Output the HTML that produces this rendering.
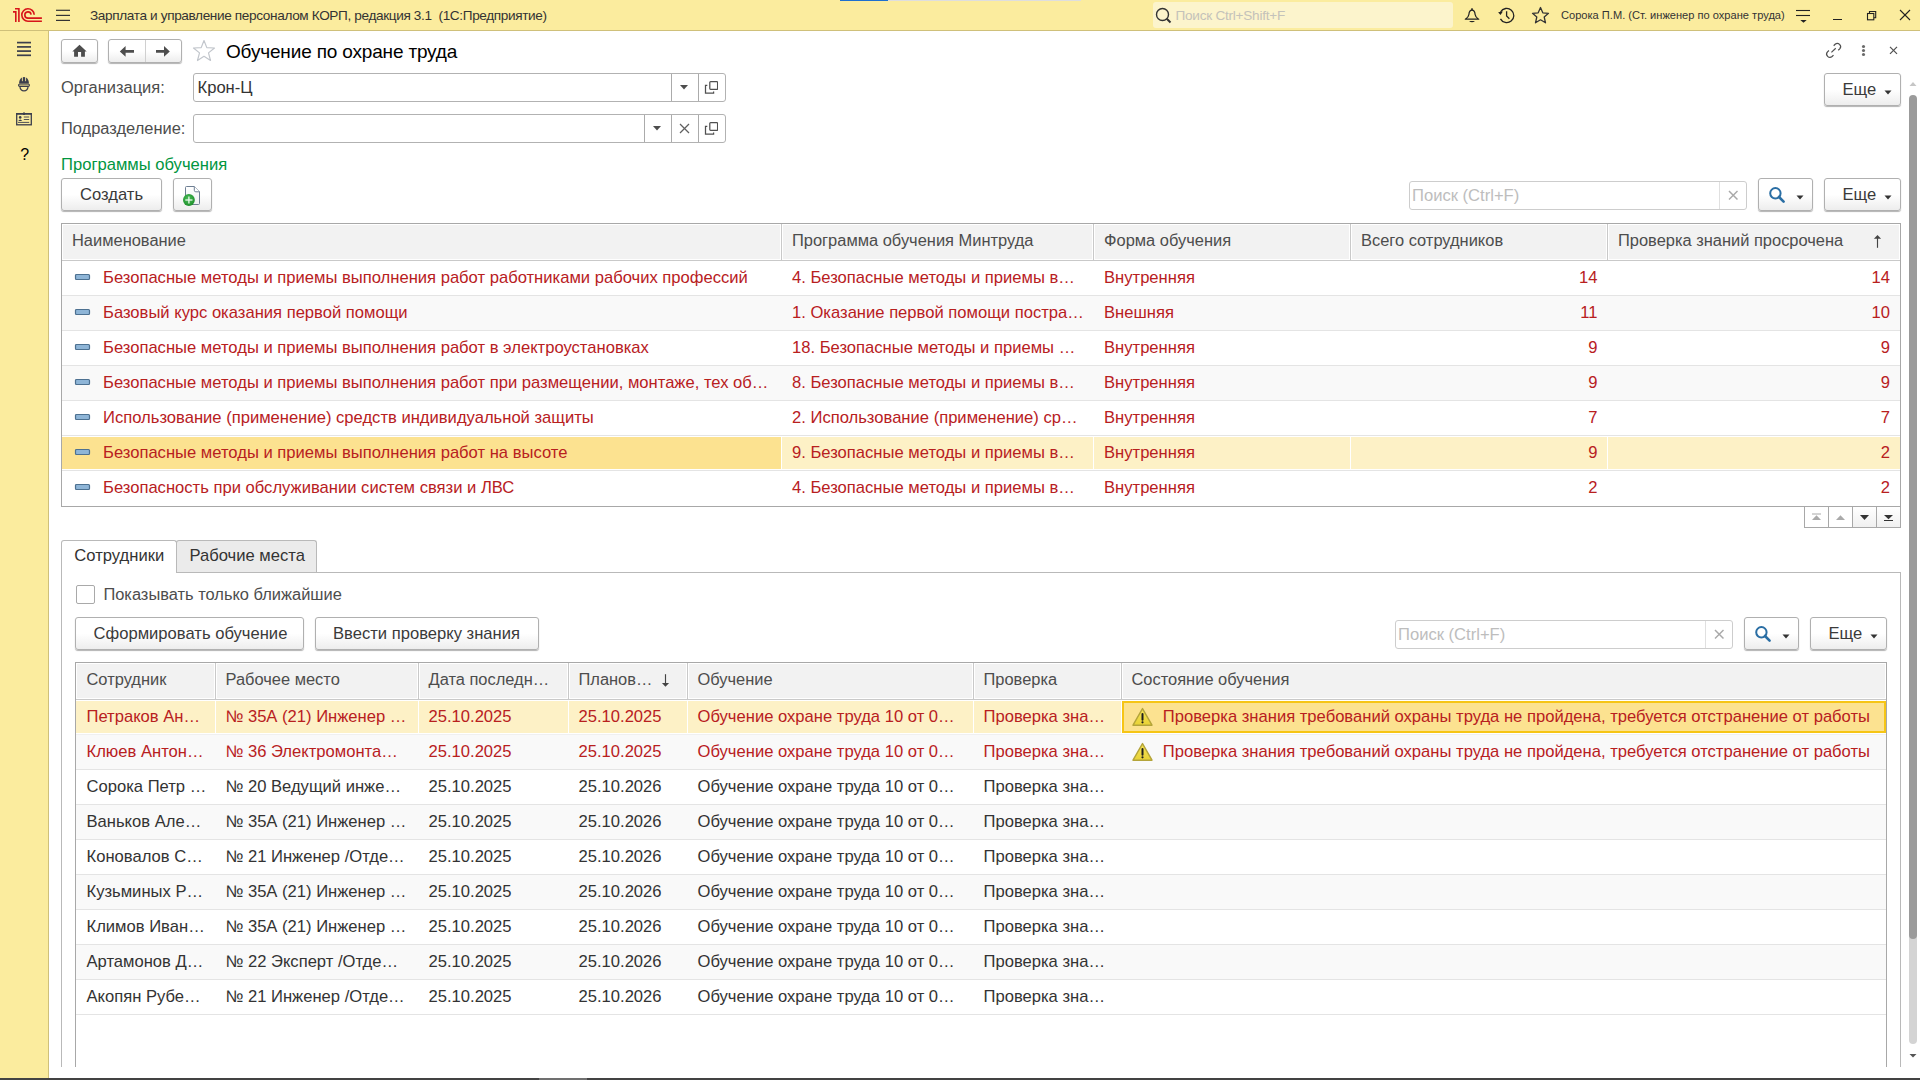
<!DOCTYPE html>
<html lang="ru"><head><meta charset="utf-8"><title>Обучение по охране труда</title>
<style>
html,body{margin:0;padding:0;}
body{width:1920px;height:1080px;overflow:hidden;position:relative;background:#fff;font-family:"Liberation Sans",sans-serif;}
.t{position:absolute;white-space:nowrap;}
.b{position:absolute;box-sizing:border-box;}
.btn{position:absolute;border:1px solid #B0B0B0;border-radius:3px;background:linear-gradient(#FFFFFF 0%,#FFFFFF 50%,#EDEDED 100%);box-shadow:0 1px 1px rgba(0,0,0,0.3);}
</style></head><body>
<div class="b" style="left:0px;top:0px;width:1920px;height:31px;background:#FBEC9E;border-bottom:1px solid #CFC07A;"></div>
<div class="b" style="left:840px;top:0px;width:48px;height:1px;background:#1D6FCF;"></div>
<div class="b" style="left:888px;top:0px;width:193px;height:1px;background:#DEDEDE;"></div>
<svg class="b" style="left:10px;top:5px;" width="36" height="20" viewBox="0 0 36 20"><g fill="none" stroke="#D7141A" stroke-width="1.6">
<path d="M3 6.85 H5.8 V16.9"/><path d="M5 3.8 H8.9 V16.9"/>
<path d="M24.2 9.7 A6.2 6.2 0 1 0 18 16.2 H31.9"/>
<path d="M21.1 9.6 A3.15 3.15 0 1 0 18 13.15 H31.9"/>
</g></svg>
<svg class="b" style="left:55px;top:8px;" width="16" height="14" viewBox="0 0 16 14"><g stroke="#333" stroke-width="1.2"><line x1="1" y1="2.3" x2="15" y2="2.3"/><line x1="1" y1="7.4" x2="15" y2="7.4"/><line x1="1" y1="12.4" x2="15" y2="12.4"/></g></svg>
<div class="t" style="left:90px;top:8.89px;font-size:13.6px;line-height:13.6px;color:#333;letter-spacing:-0.36px;">Зарплата и управление персоналом КОРП, редакция 3.1&nbsp; (1С:Предприятие)</div>
<div class="b" style="left:1153px;top:2px;width:300px;height:26px;background:#FCF4CC;border-radius:3px;"></div>
<svg class="b" style="left:1155px;top:7px;" width="18" height="17" viewBox="0 0 18 17"><g fill="none" stroke="#333" stroke-width="1.4"><circle cx="7.5" cy="7.5" r="6"/><line x1="11.8" y1="11.8" x2="15.5" y2="15.5" stroke-width="2"/></g></svg>
<div class="t" style="left:1175.5px;top:8.69px;font-size:13.6px;line-height:13.6px;color:#C4C2BA;letter-spacing:-0.25px;">Поиск Ctrl+Shift+F</div>
<svg class="b" style="left:1463px;top:6px;" width="18" height="19" viewBox="0 0 18 19"><path d="M9 4.2 C6.6 4.2 6.1 6 5.9 8.5 C5.7 10.6 4.6 11.8 2.3 13.2 L15.7 13.2 C13.4 11.8 12.3 10.6 12.1 8.5 C11.9 6 11.4 4.2 9 4.2 Z" fill="none" stroke="#222" stroke-width="1.25" stroke-linejoin="round"/><rect x="8.2" y="2.3" width="1.6" height="2" fill="#222"/><path d="M6 15 L12 15 Q9 17.4 6 15 Z" fill="#222"/></svg>
<svg class="b" style="left:1497px;top:6px;" width="19" height="19" viewBox="0 0 19 19"><g fill="none" stroke="#222" stroke-width="1.3"><path d="M3.45 12.85 A7.1 7.1 0 1 0 3.6 5.9"/><path d="M9.6 5.3 L9.6 10 L12.4 12.7"/></g><path d="M1.1 6.3 L5.9 5.5 L3.5 9.1 Z" fill="#222"/></svg>
<svg class="b" style="left:1531px;top:6px;" width="19" height="19" viewBox="0 0 19 19"><path d="M9.5 1.5 L11.8 6.8 L17.5 7.3 L13.2 11 L14.5 16.8 L9.5 13.8 L4.5 16.8 L5.8 11 L1.5 7.3 L7.2 6.8 Z" fill="none" stroke="#333" stroke-width="1.3" stroke-linejoin="round"/></svg>
<div class="t" style="left:1561px;top:9.90px;font-size:11.1px;line-height:11.1px;color:#333;">Сорока П.М. (Ст. инженер по охране труда)</div>
<svg class="b" style="left:1795px;top:8px;" width="16" height="16" viewBox="0 0 16 16"><g stroke="#222" stroke-width="1.1"><line x1="1" y1="2.5" x2="15" y2="2.5"/><line x1="1" y1="7.5" x2="15" y2="7.5"/></g><path d="M5.3 12 L11.7 12 L8.5 14.8Z" fill="#222"/></svg>
<div class="b" style="left:1833px;top:19px;width:9px;height:1.1px;background:#222;"></div>
<svg class="b" style="left:1866px;top:10px;" width="12" height="12" viewBox="0 0 12 12"><g fill="none" stroke="#222" stroke-width="1.1"><rect x="1.5" y="3.5" width="6.3" height="6.3"/><path d="M3.5 3.5 L3.5 1.5 L9.7 1.5 L9.7 7.7 L7.8 7.7"/></g></svg>
<svg class="b" style="left:1899px;top:9px;" width="12" height="12" viewBox="0 0 12 12"><g stroke="#222" stroke-width="1.1"><line x1="1" y1="1" x2="11" y2="11"/><line x1="11" y1="1" x2="1" y2="11"/></g></svg>
<div class="b" style="left:0px;top:31px;width:49px;height:1049px;background:#FBEC9E;border-right:1px solid #CFC07A;"></div>
<svg class="b" style="left:16px;top:41px;" width="16" height="16" viewBox="0 0 16 16"><g stroke="#3C3F4C" stroke-width="1.7"><line x1="1" y1="1.6" x2="15" y2="1.6"/><line x1="1" y1="5.9" x2="15" y2="5.9"/><line x1="1" y1="10.1" x2="15" y2="10.1"/><line x1="1" y1="14.3" x2="15" y2="14.3"/></g></svg>
<svg class="b" style="left:17px;top:76px;" width="14" height="16" viewBox="0 0 14 16"><path d="M2.1 7.4 C2.1 3.5 4.2 1.2 7 1 C9.8 1.2 11.9 3.5 11.9 7.4 Z" fill="#3C3F4C"/><g stroke="#FBEC9E" stroke-width="0.9"><line x1="5.4" y1="0" x2="5.4" y2="5.2"/><line x1="8.6" y1="0" x2="8.6" y2="5.2"/></g><rect x="1.6" y="8" width="10.8" height="2.4" rx="1.1" fill="#D8CB86" stroke="#3C3F4C" stroke-width="1.1"/><path d="M2.9 10.6 C3.2 13.5 5 14.8 7 14.8 C9 14.8 10.8 13.5 11.1 10.6" fill="none" stroke="#3C3F4C" stroke-width="1.2"/></svg>
<svg class="b" style="left:15px;top:112px;" width="18" height="14" viewBox="0 0 18 14"><rect x="1.7" y="1.8" width="14.6" height="11" fill="none" stroke="#3C3F4C" stroke-width="1.3"/><rect x="1" y="1" width="16" height="1.6" fill="#3C3F4C"/><rect x="8" y="0.5" width="2" height="2.5" fill="#3C3F4C"/><circle cx="5.2" cy="5.4" r="1.3" fill="#3C3F4C"/><path d="M3.2 9 Q5.2 5.8 7.2 9Z" fill="#3C3F4C"/><g stroke="#3C3F4C" stroke-width="0.9"><line x1="8.8" y1="5" x2="14.2" y2="5"/><line x1="8.8" y1="7.5" x2="14.2" y2="7.5"/><line x1="3" y1="10.4" x2="14.2" y2="10.4"/></g></svg>
<div class="t" style="left:20.3px;top:147.06px;font-size:16px;line-height:16px;color:#000;">?</div>
<div class="b" style="left:0px;top:1078px;width:1920px;height:2px;background:#434343;"></div>
<div class="b" style="left:539px;top:1078px;width:48px;height:2px;background:#707070;"></div>
<div class="btn" style="left:61px;top:39px;width:35px;height:22px;"></div>
<svg class="b" style="left:71px;top:44px;" width="17" height="16" viewBox="0 0 17 16"><path d="M8.5 0.8 L15.7 7.6 L13.9 7.6 V12.8 H10.1 V7.9 H7 V12.8 H3.1 V7.6 H1.3 Z" fill="#4D4D4D"/></svg>
<div class="btn" style="left:108px;top:39px;width:72px;height:22px;"></div>
<div class="b" style="left:145px;top:40px;width:1px;height:22px;background:#D0D0D0;"></div>
<svg class="b" style="left:118px;top:44px;" width="18" height="16" viewBox="0 0 18 16"><path d="M1.8 7.5 L7.6 2 L7.6 6 L16 6 L16 8.8 L7.6 8.8 L7.6 12.8 Z" fill="#4D4D4D"/></svg>
<svg class="b" style="left:154px;top:44px;" width="18" height="16" viewBox="0 0 18 16"><path d="M15.8 7.5 L10 2 L10 6 L2 6 L2 8.8 L10 8.8 L10 12.8 Z" fill="#4D4D4D"/></svg>
<svg class="b" style="left:192px;top:39px;" width="24" height="24" viewBox="0 0 24 24"><path d="M12 1.5 L14.8 8.6 L22.5 9 L16.5 13.9 L18.5 21.5 L12 17.3 L5.5 21.5 L7.5 13.9 L1.5 9 L9.2 8.6 Z" fill="none" stroke="#C2C6CC" stroke-width="1.2" stroke-linejoin="round"/></svg>
<div class="t" style="left:226px;top:41.92px;font-size:19px;line-height:19px;color:#000;letter-spacing:-0.17px;">Обучение по охране труда</div>
<svg class="b" style="left:1824px;top:41px;" width="20" height="20" viewBox="0 0 20 20"><g fill="none" stroke="#505050" stroke-width="1.3" transform="translate(9.6 9.4) scale(0.93) translate(-9.6 -9.4)"><path d="M4.6 9.5 L3.03 11.03 A3.5 3.5 0 0 0 7.97 15.97 L9.5 14.4"/><path d="M9.7 4.4 L11.23 2.83 A3.5 3.5 0 0 1 16.17 7.77 L14.6 9.3"/><path d="M7.25 11.5 L11.9 7.1"/></g></svg>
<svg class="b" style="left:1860px;top:43px;" width="6" height="15" viewBox="0 0 6 15"><g fill="#6A6A6A"><circle cx="3.5" cy="3.5" r="1.55"/><circle cx="3.5" cy="7.5" r="1.55"/><circle cx="3.5" cy="11.5" r="1.55"/></g></svg>
<svg class="b" style="left:1888px;top:45px;" width="11" height="11" viewBox="0 0 11 11"><g stroke="#505050" stroke-width="1.2"><line x1="2" y1="1.9" x2="9" y2="8.9"/><line x1="9" y1="1.9" x2="2" y2="8.9"/></g></svg>
<div class="btn" style="left:1824px;top:73px;width:75px;height:31px;"></div>
<div class="t" style="left:1842.5px;top:82.45px;font-size:16.6px;line-height:16.6px;color:#3A3A3A;">Еще</div>
<svg class="b" style="left:1884px;top:90px;" width="8" height="5" viewBox="0 0 8 5"><path d="M0.5 0.5 L7.5 0.5 L4 4.5 Z" fill="#333"/></svg>
<svg class="b" style="left:1908px;top:80px;" width="10" height="8" viewBox="0 0 10 8"><path d="M1.5 6 L5 2 L8.5 6 Z" fill="#C6C6C6"/></svg>
<div class="b" style="left:1909px;top:880px;width:8px;height:164px;background:#D4D4D4;border-radius:4px;"></div>
<div class="b" style="left:1909px;top:95px;width:8px;height:844px;background:#9B9B9B;border-radius:4px;"></div>
<svg class="b" style="left:1908px;top:1052px;" width="10" height="8" viewBox="0 0 10 8"><path d="M1.5 2 L8.5 2 L5 5.6 Z" fill="#555"/></svg>
<div class="t" style="left:61px;top:78.98px;font-size:16.45px;line-height:16.45px;color:#4D4D4D;">Организация:</div>
<div class="b" style="left:193px;top:73px;width:533px;height:29px;border:1px solid #B2B2B2;border-radius:3px;background:#fff;"></div>
<div class="t" style="left:197.5px;top:79.55px;font-size:16.6px;line-height:16.6px;color:#333;">Крон-Ц</div>
<div class="b" style="left:671px;top:74px;width:1px;height:27px;background:#ABABAB;"></div>
<div class="b" style="left:698px;top:74px;width:1px;height:27px;background:#ABABAB;"></div>
<svg class="b" style="left:679px;top:84px;" width="10" height="6" viewBox="0 0 10 6"><path d="M1 1 L9 1 L5 5.5 Z" fill="#4D4D4D"/></svg>
<svg class="b" style="left:704px;top:80px;" width="14" height="14" viewBox="0 0 14 14"><g fill="none" stroke="#505050" stroke-width="1.25"><rect x="5.8" y="1.6" width="7.8" height="7.8" rx="0.8"/><path d="M3.3 5.4 H1.5 V13.1 H9.6 V11.5"/></g></svg>
<div class="t" style="left:61px;top:119.58px;font-size:16.45px;line-height:16.45px;color:#4D4D4D;">Подразделение:</div>
<div class="b" style="left:193px;top:114px;width:533px;height:29px;border:1px solid #B2B2B2;border-radius:3px;background:#fff;"></div>
<div class="b" style="left:644px;top:115px;width:1px;height:27px;background:#ABABAB;"></div>
<div class="b" style="left:671px;top:115px;width:1px;height:27px;background:#ABABAB;"></div>
<div class="b" style="left:698px;top:115px;width:1px;height:27px;background:#ABABAB;"></div>
<svg class="b" style="left:652px;top:125px;" width="10" height="6" viewBox="0 0 10 6"><path d="M1 1 L9 1 L5 5.5 Z" fill="#4D4D4D"/></svg>
<svg class="b" style="left:679px;top:123px;" width="11" height="11" viewBox="0 0 11 11"><g stroke="#606060" stroke-width="1.2"><line x1="1" y1="1" x2="10" y2="10"/><line x1="10" y1="1" x2="1" y2="10"/></g></svg>
<svg class="b" style="left:704px;top:121px;" width="14" height="14" viewBox="0 0 14 14"><g fill="none" stroke="#505050" stroke-width="1.25"><rect x="5.8" y="1.6" width="7.8" height="7.8" rx="0.8"/><path d="M3.3 5.4 H1.5 V13.1 H9.6 V11.5"/></g></svg>
<div class="t" style="left:61px;top:156.75px;font-size:16.6px;line-height:16.6px;color:#00963F;">Программы обучения</div>
<div class="btn" style="left:61px;top:178px;width:99px;height:31px;"></div>
<div class="t" style="left:80px;top:187.45px;font-size:16.6px;line-height:16.6px;color:#3A3A3A;">Создать</div>
<div class="btn" style="left:173px;top:178px;width:37px;height:31px;"></div>
<svg class="b" style="left:182px;top:184px;" width="20" height="22" viewBox="0 0 20 22"><defs><linearGradient id="dg" x1="0" y1="0" x2="0" y2="1"><stop offset="0" stop-color="#FFFFFF"/><stop offset="1" stop-color="#EEF0F3"/></linearGradient><radialGradient id="gg" cx="0.45" cy="0.4" r="0.6"><stop offset="0" stop-color="#4CC05A"/><stop offset="1" stop-color="#1E8F2C"/></radialGradient></defs><path d="M4.5 2.5 H12.3 L17.5 7.8 V19.5 A1 1 0 0 1 16.5 20.5 H4.5 A1 1 0 0 1 3.5 19.5 V3.5 A1 1 0 0 1 4.5 2.5 Z" fill="url(#dg)" stroke="#6E7F93" stroke-width="1"/><path d="M12.3 2.5 V6.3 A1.5 1.5 0 0 0 13.8 7.8 H17.5" fill="#fff" stroke="#6E7F93" stroke-width="1"/><circle cx="6.9" cy="16" r="5.9" fill="url(#gg)"/><g stroke="#fff" stroke-width="1.3" opacity="0.9"><line x1="3.3" y1="16" x2="10.5" y2="16"/><line x1="6.9" y1="12.4" x2="6.9" y2="19.6"/></g></svg>
<div class="b" style="left:1409px;top:181px;width:338px;height:29px;border:1px solid #CDCDCD;border-radius:3px;background:#fff;"></div>
<div class="t" style="left:1412px;top:188.15px;font-size:16.6px;line-height:16.6px;color:#BDBDBD;">Поиск (Ctrl+F)</div>
<div class="b" style="left:1719px;top:182px;width:1px;height:27px;background:#E0E0E0;"></div>
<svg class="b" style="left:1728px;top:190px;" width="11" height="11" viewBox="0 0 11 11"><g stroke="#A9A9A9" stroke-width="1.5"><line x1="1" y1="1" x2="9.5" y2="9.5"/><line x1="9.5" y1="1" x2="1" y2="9.5"/></g></svg>
<div class="btn" style="left:1758px;top:178px;width:53px;height:31px;"></div>
<svg class="b" style="left:1769px;top:187px;" width="18" height="17" viewBox="0 0 18 17"><circle cx="6.4" cy="6.3" r="5.2" fill="none" stroke="#2A6EA4" stroke-width="2"/><line x1="10" y1="10" x2="14.6" y2="14.6" stroke="#2A6EA4" stroke-width="2.6" stroke-linecap="round"/></svg>
<svg class="b" style="left:1795.5px;top:195px;" width="8" height="5" viewBox="0 0 8 5"><path d="M0.5 0.5 L7.5 0.5 L4 4.5 Z" fill="#333"/></svg>
<div class="btn" style="left:1824px;top:178px;width:75px;height:31px;"></div>
<div class="t" style="left:1842.5px;top:187.45px;font-size:16.6px;line-height:16.6px;color:#3A3A3A;">Еще</div>
<svg class="b" style="left:1884px;top:195px;" width="8" height="5" viewBox="0 0 8 5"><path d="M0.5 0.5 L7.5 0.5 L4 4.5 Z" fill="#333"/></svg>
<div class="b" style="left:61px;top:223px;width:1840px;height:284px;border:1px solid #A8A8A8;background:#fff;"></div>
<div class="b" style="left:62px;top:260px;width:1838px;height:1px;background:#C9C9C9;"></div>
<div class="b" style="left:63px;top:225px;width:717px;height:34px;background:#F2F2F2;"></div>
<div class="b" style="left:783px;top:225px;width:309px;height:34px;background:#F2F2F2;"></div>
<div class="b" style="left:781px;top:224px;width:1px;height:36px;background:#C9C9C9;"></div>
<div class="b" style="left:1095px;top:225px;width:254px;height:34px;background:#F2F2F2;"></div>
<div class="b" style="left:1093px;top:224px;width:1px;height:36px;background:#C9C9C9;"></div>
<div class="b" style="left:1352px;top:225px;width:254px;height:34px;background:#F2F2F2;"></div>
<div class="b" style="left:1350px;top:224px;width:1px;height:36px;background:#C9C9C9;"></div>
<div class="b" style="left:1609px;top:225px;width:290px;height:34px;background:#F2F2F2;"></div>
<div class="b" style="left:1607px;top:224px;width:1px;height:36px;background:#C9C9C9;"></div>
<div class="t" style="left:72px;top:231.58px;font-size:16.45px;line-height:16.45px;color:#4D4D4D;">Наименование</div>
<div class="t" style="left:792px;top:231.58px;font-size:16.45px;line-height:16.45px;color:#4D4D4D;">Программа обучения Минтруда</div>
<div class="t" style="left:1104px;top:231.58px;font-size:16.45px;line-height:16.45px;color:#4D4D4D;">Форма обучения</div>
<div class="t" style="left:1361px;top:231.58px;font-size:16.45px;line-height:16.45px;color:#4D4D4D;">Всего сотрудников</div>
<div class="t" style="left:1618px;top:231.58px;font-size:16.45px;line-height:16.45px;color:#4D4D4D;">Проверка знаний просрочена</div>
<svg class="b" style="left:1872px;top:233px;" width="11" height="16" viewBox="0 0 11 16"><path d="M5.5 5 L5.5 14.8" stroke="#444" stroke-width="1.15"/><path d="M1.9 5.8 L5.5 1.9 L9.1 5.8 Z" fill="#444"/></svg>
<div class="b" style="left:62px;top:295px;width:1838px;height:1px;background:#E4E4E4;"></div>
<svg class="b" style="left:74px;top:273px;" width="17" height="8" viewBox="0 0 17 8"><rect x="1.5" y="1.5" width="14" height="5" rx="1" fill="#8EB5D7" stroke="#4D7191" stroke-width="1.2"/></svg>
<div class="t" style="left:103px;top:269.95px;font-size:16.6px;line-height:16.6px;color:#B8201E;">Безопасные методы и приемы выполнения работ работниками рабочих профессий</div>
<div class="t" style="left:792px;top:269.95px;font-size:16.6px;line-height:16.6px;color:#B8201E;">4. Безопасные методы и приемы в…</div>
<div class="t" style="left:1104px;top:269.95px;font-size:16.6px;line-height:16.6px;color:#B8201E;">Внутренняя</div>
<div class="t" style="right:322.5px;top:269.95px;font-size:16.6px;line-height:16.6px;color:#B8201E;">14</div>
<div class="t" style="right:30px;top:269.95px;font-size:16.6px;line-height:16.6px;color:#B8201E;">14</div>
<div class="b" style="left:62px;top:296px;width:1838px;height:34px;background:#F9F9F9;"></div>
<div class="b" style="left:62px;top:330px;width:1838px;height:1px;background:#E4E4E4;"></div>
<svg class="b" style="left:74px;top:308px;" width="17" height="8" viewBox="0 0 17 8"><rect x="1.5" y="1.5" width="14" height="5" rx="1" fill="#8EB5D7" stroke="#4D7191" stroke-width="1.2"/></svg>
<div class="t" style="left:103px;top:304.95px;font-size:16.6px;line-height:16.6px;color:#B8201E;">Базовый курс оказания первой помощи</div>
<div class="t" style="left:792px;top:304.95px;font-size:16.6px;line-height:16.6px;color:#B8201E;">1. Оказание первой помощи постра…</div>
<div class="t" style="left:1104px;top:304.95px;font-size:16.6px;line-height:16.6px;color:#B8201E;">Внешняя</div>
<div class="t" style="right:322.5px;top:304.95px;font-size:16.6px;line-height:16.6px;color:#B8201E;">11</div>
<div class="t" style="right:30px;top:304.95px;font-size:16.6px;line-height:16.6px;color:#B8201E;">10</div>
<div class="b" style="left:62px;top:365px;width:1838px;height:1px;background:#E4E4E4;"></div>
<svg class="b" style="left:74px;top:343px;" width="17" height="8" viewBox="0 0 17 8"><rect x="1.5" y="1.5" width="14" height="5" rx="1" fill="#8EB5D7" stroke="#4D7191" stroke-width="1.2"/></svg>
<div class="t" style="left:103px;top:339.95px;font-size:16.6px;line-height:16.6px;color:#B8201E;">Безопасные методы и приемы выполнения работ в электроустановках</div>
<div class="t" style="left:792px;top:339.95px;font-size:16.6px;line-height:16.6px;color:#B8201E;">18. Безопасные методы и приемы …</div>
<div class="t" style="left:1104px;top:339.95px;font-size:16.6px;line-height:16.6px;color:#B8201E;">Внутренняя</div>
<div class="t" style="right:322.5px;top:339.95px;font-size:16.6px;line-height:16.6px;color:#B8201E;">9</div>
<div class="t" style="right:30px;top:339.95px;font-size:16.6px;line-height:16.6px;color:#B8201E;">9</div>
<div class="b" style="left:62px;top:366px;width:1838px;height:34px;background:#F9F9F9;"></div>
<div class="b" style="left:62px;top:400px;width:1838px;height:1px;background:#E4E4E4;"></div>
<svg class="b" style="left:74px;top:378px;" width="17" height="8" viewBox="0 0 17 8"><rect x="1.5" y="1.5" width="14" height="5" rx="1" fill="#8EB5D7" stroke="#4D7191" stroke-width="1.2"/></svg>
<div class="t" style="left:103px;top:374.95px;font-size:16.6px;line-height:16.6px;color:#B8201E;">Безопасные методы и приемы выполнения работ при размещении, монтаже, тех об…</div>
<div class="t" style="left:792px;top:374.95px;font-size:16.6px;line-height:16.6px;color:#B8201E;">8. Безопасные методы и приемы в…</div>
<div class="t" style="left:1104px;top:374.95px;font-size:16.6px;line-height:16.6px;color:#B8201E;">Внутренняя</div>
<div class="t" style="right:322.5px;top:374.95px;font-size:16.6px;line-height:16.6px;color:#B8201E;">9</div>
<div class="t" style="right:30px;top:374.95px;font-size:16.6px;line-height:16.6px;color:#B8201E;">9</div>
<div class="b" style="left:62px;top:435px;width:1838px;height:1px;background:#E4E4E4;"></div>
<svg class="b" style="left:74px;top:413px;" width="17" height="8" viewBox="0 0 17 8"><rect x="1.5" y="1.5" width="14" height="5" rx="1" fill="#8EB5D7" stroke="#4D7191" stroke-width="1.2"/></svg>
<div class="t" style="left:103px;top:409.95px;font-size:16.6px;line-height:16.6px;color:#B8201E;">Использование (применение) средств индивидуальной защиты</div>
<div class="t" style="left:792px;top:409.95px;font-size:16.6px;line-height:16.6px;color:#B8201E;">2. Использование (применение) ср…</div>
<div class="t" style="left:1104px;top:409.95px;font-size:16.6px;line-height:16.6px;color:#B8201E;">Внутренняя</div>
<div class="t" style="right:322.5px;top:409.95px;font-size:16.6px;line-height:16.6px;color:#B8201E;">7</div>
<div class="t" style="right:30px;top:409.95px;font-size:16.6px;line-height:16.6px;color:#B8201E;">7</div>
<div class="b" style="left:62px;top:437px;width:1838px;height:32px;background:#FDF1C6;"></div>
<div class="b" style="left:62px;top:437px;width:719px;height:32px;background:#FCE290;"></div>
<div class="b" style="left:781px;top:436px;width:1px;height:34px;background:#FFFFFF;"></div>
<div class="b" style="left:1093px;top:436px;width:1px;height:34px;background:#FFFFFF;"></div>
<div class="b" style="left:1350px;top:436px;width:1px;height:34px;background:#FFFFFF;"></div>
<div class="b" style="left:1607px;top:436px;width:1px;height:34px;background:#FFFFFF;"></div>
<div class="b" style="left:62px;top:470px;width:1838px;height:1px;background:#E4E4E4;"></div>
<svg class="b" style="left:74px;top:448px;" width="17" height="8" viewBox="0 0 17 8"><rect x="1.5" y="1.5" width="14" height="5" rx="1" fill="#8EB5D7" stroke="#4D7191" stroke-width="1.2"/></svg>
<div class="t" style="left:103px;top:444.95px;font-size:16.6px;line-height:16.6px;color:#B8201E;">Безопасные методы и приемы выполнения работ на высоте</div>
<div class="t" style="left:792px;top:444.95px;font-size:16.6px;line-height:16.6px;color:#B8201E;">9. Безопасные методы и приемы в…</div>
<div class="t" style="left:1104px;top:444.95px;font-size:16.6px;line-height:16.6px;color:#B8201E;">Внутренняя</div>
<div class="t" style="right:322.5px;top:444.95px;font-size:16.6px;line-height:16.6px;color:#B8201E;">9</div>
<div class="t" style="right:30px;top:444.95px;font-size:16.6px;line-height:16.6px;color:#B8201E;">2</div>
<svg class="b" style="left:74px;top:483px;" width="17" height="8" viewBox="0 0 17 8"><rect x="1.5" y="1.5" width="14" height="5" rx="1" fill="#8EB5D7" stroke="#4D7191" stroke-width="1.2"/></svg>
<div class="t" style="left:103px;top:479.95px;font-size:16.6px;line-height:16.6px;color:#B8201E;">Безопасность при обслуживании систем связи и ЛВС</div>
<div class="t" style="left:792px;top:479.95px;font-size:16.6px;line-height:16.6px;color:#B8201E;">4. Безопасные методы и приемы в…</div>
<div class="t" style="left:1104px;top:479.95px;font-size:16.6px;line-height:16.6px;color:#B8201E;">Внутренняя</div>
<div class="t" style="right:322.5px;top:479.95px;font-size:16.6px;line-height:16.6px;color:#B8201E;">2</div>
<div class="t" style="right:30px;top:479.95px;font-size:16.6px;line-height:16.6px;color:#B8201E;">2</div>
<div class="b" style="left:1804px;top:507px;width:97px;height:21px;border:1px solid #A8A8A8;border-top:none;background:#fff;"></div>
<div class="b" style="left:1853px;top:507px;width:47px;height:20px;background:linear-gradient(#FFFFFF,#F0F0F0);"></div>
<div class="b" style="left:1828px;top:507px;width:1px;height:21px;background:#A8A8A8;"></div>
<div class="b" style="left:1852px;top:507px;width:1px;height:21px;background:#A8A8A8;"></div>
<div class="b" style="left:1876px;top:507px;width:1px;height:21px;background:#A8A8A8;"></div>
<svg class="b" style="left:1811px;top:513px;" width="12" height="9" viewBox="0 0 12 9"><rect x="1" y="0.5" width="9" height="1" fill="#AAAAAA"/><path d="M1 7 L10 7 L5.5 2.3 Z" fill="#AAAAAA"/></svg>
<svg class="b" style="left:1835px;top:513px;" width="12" height="9" viewBox="0 0 12 9"><path d="M1 7 L10 7 L5.5 2.3 Z" fill="#AAAAAA"/></svg>
<svg class="b" style="left:1859px;top:513px;" width="12" height="9" viewBox="0 0 12 9"><path d="M1 2 L10 2 L5.5 7 Z" fill="#333"/></svg>
<svg class="b" style="left:1883px;top:513px;" width="12" height="9" viewBox="0 0 12 9"><path d="M1 2 L10 2 L5.5 6.3 Z" fill="#333"/><rect x="1" y="7" width="9" height="1" fill="#333"/></svg>
<div class="b" style="left:61px;top:572px;width:1840px;height:495px;border:1px solid #B9B9B9;border-bottom:none;"></div>
<div class="b" style="left:176px;top:540px;width:141px;height:32px;background:#EBEBEB;border:1px solid #B9B9B9;border-bottom:none;border-radius:3px 3px 0 0;"></div>
<div class="b" style="left:61px;top:540px;width:116px;height:33px;background:#fff;border:1px solid #B9B9B9;border-bottom:none;border-radius:3px 3px 0 0;"></div>
<div class="b" style="left:62px;top:572px;width:114px;height:1px;background:#fff;"></div>
<div class="t" style="left:74.3px;top:548.15px;font-size:16.6px;line-height:16.6px;color:#333;">Сотрудники</div>
<div class="t" style="left:189.5px;top:548.15px;font-size:16.6px;line-height:16.6px;color:#333;">Рабочие места</div>
<div class="b" style="left:76px;top:585px;width:19px;height:19px;border:1px solid #A9A9A9;border-radius:2px;background:#fff;"></div>
<div class="t" style="left:103.4px;top:586.48px;font-size:16.45px;line-height:16.45px;color:#4D4D4D;">Показывать только ближайшие</div>
<div class="btn" style="left:75px;top:617px;width:227px;height:31px;"></div>
<div class="t" style="left:93.6px;top:626.25px;font-size:16.6px;line-height:16.6px;color:#3A3A3A;">Сформировать обучение</div>
<div class="btn" style="left:315px;top:617px;width:222px;height:31px;"></div>
<div class="t" style="left:333px;top:626.25px;font-size:16.6px;line-height:16.6px;color:#3A3A3A;">Ввести проверку знания</div>
<div class="b" style="left:1395px;top:620px;width:338px;height:29px;border:1px solid #CDCDCD;border-radius:3px;background:#fff;"></div>
<div class="t" style="left:1398px;top:627.15px;font-size:16.6px;line-height:16.6px;color:#BDBDBD;">Поиск (Ctrl+F)</div>
<div class="b" style="left:1705px;top:621px;width:1px;height:27px;background:#E0E0E0;"></div>
<svg class="b" style="left:1714px;top:629px;" width="11" height="11" viewBox="0 0 11 11"><g stroke="#A9A9A9" stroke-width="1.5"><line x1="1" y1="1" x2="9.5" y2="9.5"/><line x1="9.5" y1="1" x2="1" y2="9.5"/></g></svg>
<div class="btn" style="left:1744px;top:617px;width:53px;height:31px;"></div>
<svg class="b" style="left:1755px;top:626px;" width="18" height="17" viewBox="0 0 18 17"><circle cx="6.4" cy="6.3" r="5.2" fill="none" stroke="#2A6EA4" stroke-width="2"/><line x1="10" y1="10" x2="14.6" y2="14.6" stroke="#2A6EA4" stroke-width="2.6" stroke-linecap="round"/></svg>
<svg class="b" style="left:1781.5px;top:634px;" width="8" height="5" viewBox="0 0 8 5"><path d="M0.5 0.5 L7.5 0.5 L4 4.5 Z" fill="#333"/></svg>
<div class="btn" style="left:1810px;top:617px;width:75px;height:31px;"></div>
<div class="t" style="left:1828.5px;top:626.45px;font-size:16.6px;line-height:16.6px;color:#3A3A3A;">Еще</div>
<svg class="b" style="left:1870px;top:634px;" width="8" height="5" viewBox="0 0 8 5"><path d="M0.5 0.5 L7.5 0.5 L4 4.5 Z" fill="#333"/></svg>
<div class="b" style="left:75px;top:662px;width:1812px;height:405px;border:1px solid #A8A8A8;border-bottom:none;background:#fff;"></div>
<div class="b" style="left:76px;top:699px;width:1810px;height:1px;background:#C9C9C9;"></div>
<div class="b" style="left:77px;top:664px;width:137px;height:34px;background:#F2F2F2;"></div>
<div class="b" style="left:217px;top:664px;width:200px;height:34px;background:#F2F2F2;"></div>
<div class="b" style="left:215px;top:663px;width:1px;height:36px;background:#C9C9C9;"></div>
<div class="b" style="left:420px;top:664px;width:147px;height:34px;background:#F2F2F2;"></div>
<div class="b" style="left:418px;top:663px;width:1px;height:36px;background:#C9C9C9;"></div>
<div class="b" style="left:570px;top:664px;width:116px;height:34px;background:#F2F2F2;"></div>
<div class="b" style="left:568px;top:663px;width:1px;height:36px;background:#C9C9C9;"></div>
<div class="b" style="left:689px;top:664px;width:283px;height:34px;background:#F2F2F2;"></div>
<div class="b" style="left:687px;top:663px;width:1px;height:36px;background:#C9C9C9;"></div>
<div class="b" style="left:975px;top:664px;width:145px;height:34px;background:#F2F2F2;"></div>
<div class="b" style="left:973px;top:663px;width:1px;height:36px;background:#C9C9C9;"></div>
<div class="b" style="left:1123px;top:664px;width:762px;height:34px;background:#F2F2F2;"></div>
<div class="b" style="left:1121px;top:663px;width:1px;height:36px;background:#C9C9C9;"></div>
<div class="t" style="left:86.5px;top:670.58px;font-size:16.45px;line-height:16.45px;color:#4D4D4D;">Сотрудник</div>
<div class="t" style="left:225.5px;top:670.58px;font-size:16.45px;line-height:16.45px;color:#4D4D4D;">Рабочее место</div>
<div class="t" style="left:428.5px;top:670.58px;font-size:16.45px;line-height:16.45px;color:#4D4D4D;">Дата последн…</div>
<div class="t" style="left:578.5px;top:670.58px;font-size:16.45px;line-height:16.45px;color:#4D4D4D;">Планов…</div>
<div class="t" style="left:697.5px;top:670.58px;font-size:16.45px;line-height:16.45px;color:#4D4D4D;">Обучение</div>
<div class="t" style="left:983.5px;top:670.58px;font-size:16.45px;line-height:16.45px;color:#4D4D4D;">Проверка</div>
<div class="t" style="left:1131.5px;top:670.58px;font-size:16.45px;line-height:16.45px;color:#4D4D4D;">Состояние обучения</div>
<svg class="b" style="left:660px;top:672px;" width="11" height="16" viewBox="0 0 11 16"><path d="M5.5 2.2 L5.5 12" stroke="#444" stroke-width="1.15"/><path d="M1.9 11 L5.5 14.8 L9.1 11 Z" fill="#444"/></svg>
<div class="b" style="left:76px;top:701px;width:1810px;height:32px;background:#FDF1C6;"></div>
<div class="b" style="left:215px;top:700px;width:1px;height:34px;background:#FFFFFF;"></div>
<div class="b" style="left:418px;top:700px;width:1px;height:34px;background:#FFFFFF;"></div>
<div class="b" style="left:568px;top:700px;width:1px;height:34px;background:#FFFFFF;"></div>
<div class="b" style="left:687px;top:700px;width:1px;height:34px;background:#FFFFFF;"></div>
<div class="b" style="left:973px;top:700px;width:1px;height:34px;background:#FFFFFF;"></div>
<div class="b" style="left:1121px;top:700px;width:1px;height:34px;background:#FFFFFF;"></div>
<div class="b" style="left:1122px;top:701px;width:764px;height:32px;background:#FCE290;border:2px solid #F6C515;"></div>
<div class="b" style="left:76px;top:734px;width:1810px;height:1px;background:#F0F0F0;"></div>
<div class="t" style="left:86.5px;top:708.95px;font-size:16.6px;line-height:16.6px;color:#B8201E;">Петраков Ан…</div>
<div class="t" style="left:225.5px;top:708.95px;font-size:16.6px;line-height:16.6px;color:#B8201E;">№ 35А (21) Инженер …</div>
<div class="t" style="left:428.5px;top:708.95px;font-size:16.6px;line-height:16.6px;color:#B8201E;">25.10.2025</div>
<div class="t" style="left:578.5px;top:708.95px;font-size:16.6px;line-height:16.6px;color:#B8201E;">25.10.2025</div>
<div class="t" style="left:697.5px;top:708.95px;font-size:16.6px;line-height:16.6px;color:#B8201E;">Обучение охране труда 10 от 0…</div>
<div class="t" style="left:983.5px;top:708.95px;font-size:16.6px;line-height:16.6px;color:#B8201E;">Проверка зна…</div>
<svg class="b" style="left:1132px;top:707px;" width="21" height="20" viewBox="0 0 21 20"><defs><linearGradient id="wg0" x1="0" y1="0" x2="0" y2="1"><stop offset="0" stop-color="#F7E45A"/><stop offset="1" stop-color="#E8D235"/></linearGradient></defs><path d="M10.5 1.6 L20 18.2 L1 18.2 Z" fill="url(#wg0)" stroke="#B4A43A" stroke-width="1.4" stroke-linejoin="round"/><path d="M10.5 7 L10.5 12.8" stroke="#1E1E1E" stroke-width="2" stroke-linecap="round"/><circle cx="10.5" cy="15.3" r="1.1" fill="#1E1E1E"/></svg>
<div class="t" style="left:1162.8px;top:708.95px;font-size:16.6px;line-height:16.6px;color:#B8201E;">Проверка знания требований охраны труда не пройдена, требуется отстранение от работы</div>
<div class="b" style="left:76px;top:735px;width:1810px;height:34px;background:#F9F9F9;"></div>
<div class="b" style="left:76px;top:769px;width:1810px;height:1px;background:#E4E4E4;"></div>
<div class="t" style="left:86.5px;top:743.95px;font-size:16.6px;line-height:16.6px;color:#B8201E;">Клюев Антон…</div>
<div class="t" style="left:225.5px;top:743.95px;font-size:16.6px;line-height:16.6px;color:#B8201E;">№ 36 Электромонта…</div>
<div class="t" style="left:428.5px;top:743.95px;font-size:16.6px;line-height:16.6px;color:#B8201E;">25.10.2025</div>
<div class="t" style="left:578.5px;top:743.95px;font-size:16.6px;line-height:16.6px;color:#B8201E;">25.10.2025</div>
<div class="t" style="left:697.5px;top:743.95px;font-size:16.6px;line-height:16.6px;color:#B8201E;">Обучение охране труда 10 от 0…</div>
<div class="t" style="left:983.5px;top:743.95px;font-size:16.6px;line-height:16.6px;color:#B8201E;">Проверка зна…</div>
<svg class="b" style="left:1132px;top:742px;" width="21" height="20" viewBox="0 0 21 20"><defs><linearGradient id="wg1" x1="0" y1="0" x2="0" y2="1"><stop offset="0" stop-color="#F7E45A"/><stop offset="1" stop-color="#E8D235"/></linearGradient></defs><path d="M10.5 1.6 L20 18.2 L1 18.2 Z" fill="url(#wg1)" stroke="#B4A43A" stroke-width="1.4" stroke-linejoin="round"/><path d="M10.5 7 L10.5 12.8" stroke="#1E1E1E" stroke-width="2" stroke-linecap="round"/><circle cx="10.5" cy="15.3" r="1.1" fill="#1E1E1E"/></svg>
<div class="t" style="left:1162.8px;top:743.95px;font-size:16.6px;line-height:16.6px;color:#B8201E;">Проверка знания требований охраны труда не пройдена, требуется отстранение от работы</div>
<div class="b" style="left:76px;top:804px;width:1810px;height:1px;background:#E4E4E4;"></div>
<div class="t" style="left:86.5px;top:778.95px;font-size:16.6px;line-height:16.6px;color:#333333;">Сорока Петр …</div>
<div class="t" style="left:225.5px;top:778.95px;font-size:16.6px;line-height:16.6px;color:#333333;">№ 20 Ведущий инже…</div>
<div class="t" style="left:428.5px;top:778.95px;font-size:16.6px;line-height:16.6px;color:#333333;">25.10.2025</div>
<div class="t" style="left:578.5px;top:778.95px;font-size:16.6px;line-height:16.6px;color:#333333;">25.10.2026</div>
<div class="t" style="left:697.5px;top:778.95px;font-size:16.6px;line-height:16.6px;color:#333333;">Обучение охране труда 10 от 0…</div>
<div class="t" style="left:983.5px;top:778.95px;font-size:16.6px;line-height:16.6px;color:#333333;">Проверка зна…</div>
<div class="b" style="left:76px;top:805px;width:1810px;height:34px;background:#F9F9F9;"></div>
<div class="b" style="left:76px;top:839px;width:1810px;height:1px;background:#E4E4E4;"></div>
<div class="t" style="left:86.5px;top:813.95px;font-size:16.6px;line-height:16.6px;color:#333333;">Ваньков Але…</div>
<div class="t" style="left:225.5px;top:813.95px;font-size:16.6px;line-height:16.6px;color:#333333;">№ 35А (21) Инженер …</div>
<div class="t" style="left:428.5px;top:813.95px;font-size:16.6px;line-height:16.6px;color:#333333;">25.10.2025</div>
<div class="t" style="left:578.5px;top:813.95px;font-size:16.6px;line-height:16.6px;color:#333333;">25.10.2026</div>
<div class="t" style="left:697.5px;top:813.95px;font-size:16.6px;line-height:16.6px;color:#333333;">Обучение охране труда 10 от 0…</div>
<div class="t" style="left:983.5px;top:813.95px;font-size:16.6px;line-height:16.6px;color:#333333;">Проверка зна…</div>
<div class="b" style="left:76px;top:874px;width:1810px;height:1px;background:#E4E4E4;"></div>
<div class="t" style="left:86.5px;top:848.95px;font-size:16.6px;line-height:16.6px;color:#333333;">Коновалов С…</div>
<div class="t" style="left:225.5px;top:848.95px;font-size:16.6px;line-height:16.6px;color:#333333;">№ 21 Инженер /Отде…</div>
<div class="t" style="left:428.5px;top:848.95px;font-size:16.6px;line-height:16.6px;color:#333333;">25.10.2025</div>
<div class="t" style="left:578.5px;top:848.95px;font-size:16.6px;line-height:16.6px;color:#333333;">25.10.2026</div>
<div class="t" style="left:697.5px;top:848.95px;font-size:16.6px;line-height:16.6px;color:#333333;">Обучение охране труда 10 от 0…</div>
<div class="t" style="left:983.5px;top:848.95px;font-size:16.6px;line-height:16.6px;color:#333333;">Проверка зна…</div>
<div class="b" style="left:76px;top:875px;width:1810px;height:34px;background:#F9F9F9;"></div>
<div class="b" style="left:76px;top:909px;width:1810px;height:1px;background:#E4E4E4;"></div>
<div class="t" style="left:86.5px;top:883.95px;font-size:16.6px;line-height:16.6px;color:#333333;">Кузьминых Р…</div>
<div class="t" style="left:225.5px;top:883.95px;font-size:16.6px;line-height:16.6px;color:#333333;">№ 35А (21) Инженер …</div>
<div class="t" style="left:428.5px;top:883.95px;font-size:16.6px;line-height:16.6px;color:#333333;">25.10.2025</div>
<div class="t" style="left:578.5px;top:883.95px;font-size:16.6px;line-height:16.6px;color:#333333;">25.10.2026</div>
<div class="t" style="left:697.5px;top:883.95px;font-size:16.6px;line-height:16.6px;color:#333333;">Обучение охране труда 10 от 0…</div>
<div class="t" style="left:983.5px;top:883.95px;font-size:16.6px;line-height:16.6px;color:#333333;">Проверка зна…</div>
<div class="b" style="left:76px;top:944px;width:1810px;height:1px;background:#E4E4E4;"></div>
<div class="t" style="left:86.5px;top:918.95px;font-size:16.6px;line-height:16.6px;color:#333333;">Климов Иван…</div>
<div class="t" style="left:225.5px;top:918.95px;font-size:16.6px;line-height:16.6px;color:#333333;">№ 35А (21) Инженер …</div>
<div class="t" style="left:428.5px;top:918.95px;font-size:16.6px;line-height:16.6px;color:#333333;">25.10.2025</div>
<div class="t" style="left:578.5px;top:918.95px;font-size:16.6px;line-height:16.6px;color:#333333;">25.10.2026</div>
<div class="t" style="left:697.5px;top:918.95px;font-size:16.6px;line-height:16.6px;color:#333333;">Обучение охране труда 10 от 0…</div>
<div class="t" style="left:983.5px;top:918.95px;font-size:16.6px;line-height:16.6px;color:#333333;">Проверка зна…</div>
<div class="b" style="left:76px;top:945px;width:1810px;height:34px;background:#F9F9F9;"></div>
<div class="b" style="left:76px;top:979px;width:1810px;height:1px;background:#E4E4E4;"></div>
<div class="t" style="left:86.5px;top:953.95px;font-size:16.6px;line-height:16.6px;color:#333333;">Артамонов Д…</div>
<div class="t" style="left:225.5px;top:953.95px;font-size:16.6px;line-height:16.6px;color:#333333;">№ 22 Эксперт /Отде…</div>
<div class="t" style="left:428.5px;top:953.95px;font-size:16.6px;line-height:16.6px;color:#333333;">25.10.2025</div>
<div class="t" style="left:578.5px;top:953.95px;font-size:16.6px;line-height:16.6px;color:#333333;">25.10.2026</div>
<div class="t" style="left:697.5px;top:953.95px;font-size:16.6px;line-height:16.6px;color:#333333;">Обучение охране труда 10 от 0…</div>
<div class="t" style="left:983.5px;top:953.95px;font-size:16.6px;line-height:16.6px;color:#333333;">Проверка зна…</div>
<div class="b" style="left:76px;top:1014px;width:1810px;height:1px;background:#E4E4E4;"></div>
<div class="t" style="left:86.5px;top:988.95px;font-size:16.6px;line-height:16.6px;color:#333333;">Акопян Рубе…</div>
<div class="t" style="left:225.5px;top:988.95px;font-size:16.6px;line-height:16.6px;color:#333333;">№ 21 Инженер /Отде…</div>
<div class="t" style="left:428.5px;top:988.95px;font-size:16.6px;line-height:16.6px;color:#333333;">25.10.2025</div>
<div class="t" style="left:578.5px;top:988.95px;font-size:16.6px;line-height:16.6px;color:#333333;">25.10.2026</div>
<div class="t" style="left:697.5px;top:988.95px;font-size:16.6px;line-height:16.6px;color:#333333;">Обучение охране труда 10 от 0…</div>
<div class="t" style="left:983.5px;top:988.95px;font-size:16.6px;line-height:16.6px;color:#333333;">Проверка зна…</div>
</body></html>
